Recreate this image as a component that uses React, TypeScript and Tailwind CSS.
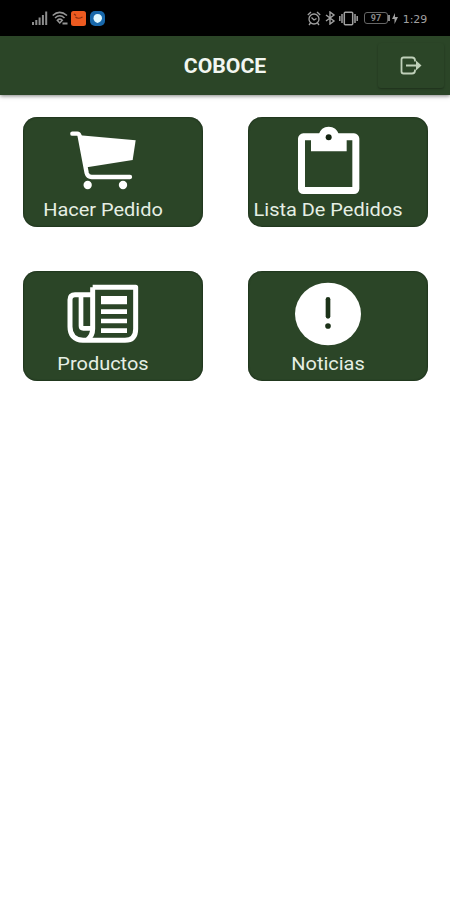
import type { ReactNode } from 'react';

function CartIcon() {
  return (
    <svg className="block h-20 w-40" viewBox="24 36 480 240" fill="none">
      <path d="M172 86H187Q192 86 194 93L215 204Q218 216 230 216H345" stroke="white" strokeWidth="13" strokeLinecap="round" strokeLinejoin="round" />
      <path d="M194 91L362 106L353 165L216 187Z" fill="white" />
      <circle cx="218" cy="240" r="12.5" fill="white" />
      <circle cx="324" cy="240" r="12.5" fill="white" />
    </svg>
  );
}

function ClipboardIcon() {
  return (
    <svg className="block h-20 w-40" viewBox="24 36 480 240" fill="none">
      <rect x="174" y="85" width="184" height="182" rx="16" fill="white" />
      <path d="M195 106H337V246H195Z" fill="#2b4527" />
      <path d="M213 88H237C240 74 251 65 266 65S293 74 296 88H320V139H213Z" fill="white" />
      <circle cx="266" cy="97" r="9" fill="#142511" />
    </svg>
  );
}

function NewspaperIcon() {
  return (
    <svg className="block h-20 w-40" viewBox="24 33 480 240" fill="none">
      <g stroke="white" strokeWidth="15" strokeLinejoin="round">
        <path d="M233 82H362V207Q362 241 330 241H204Q165 238 165 200V119Q165 104 180 104H233" />
        <path d="M233 82V207Q233 226 218 239" />
        <path d="M198 108V198Q198 205 205 205H233" strokeWidth="14" />
      </g>
      <path d="M258 108H336V133H258ZM258 148H336V162H258ZM258 176H336V190H258ZM258 205H336V219H258Z" fill="white" />
    </svg>
  );
}

function AlertIcon() {
  return (
    <svg className="block h-20 w-40" viewBox="24 33 480 240" fill="none">
      <ellipse cx="264" cy="162" rx="99" ry="94" fill="white" />
      <path d="M264 118V169" stroke="#1c3218" strokeWidth="14" strokeLinecap="round" />
      <circle cx="264" cy="198" r="8.500" fill="#1c3218" />
    </svg>
  );
}

function MenuCard({ label, children }: { label: string; children: ReactNode }) {
  return (
    <button
      className="flex h-[110px] w-[180px] flex-col items-start rounded-[14px] bg-[#2b4527] shadow-[inset_0_0_2px_#0b190b]"
    >
      {children}
      <span className="w-[160px] scale-x-[1.05] text-center text-[19px] leading-[25px] whitespace-nowrap text-[#e6efe4]">
        {label}
      </span>
    </button>
  );
}

function StatusBar() {
  return (
    <div className="flex h-9 items-center justify-between bg-black pr-[22px] pl-8 text-[#a0a0a0]">
      <div className="flex items-center">
        <svg className="h-4 w-4" viewBox="0 0 16 16" fill="#8d8d8d">
          <path d="M0 12h2v3H0zM3.300 10h2v5h-2zM6.600 7.500h2V15h-2zM9.900 5h2v10h-2zM13.200 1.500h2V15h-2z" />
        </svg>
        <svg className="ml-1 h-4 w-4" viewBox="0 0 16 16" fill="none" stroke="#959595" strokeWidth="1.500">
          <path d="M.7 5.500Q7.500-.8 15 5.500M3 8Q7.800 3.500 12.500 8M5.300 10.300Q7.800 8 10.300 10.300L7.800 13Z" />
          <path d="M10.500 13.500h5" strokeWidth="2" />
        </svg>
        <svg className="ml-[3px] h-[15px] w-[15px]" viewBox="0 0 15 15" fill="none">
          <rect width="15" height="15" rx="2.500" fill="#ed5a20" />
          <path d="M3 3l2 1.500M4.500 6Q7 8.500 11.500 6" stroke="#8a3010" strokeWidth="1.200" />
        </svg>
        <svg className="ml-1 h-[15px] w-[15px]" viewBox="0 0 15 15">
          <rect width="15" height="15" rx="5" fill="#1767aa" />
          <path d="M7.500 3C10.500 3 12 4.800 12 7.200S10 11 7.500 12C5 11 3.500 9.500 3.500 7.200S5 3 7.500 3Z" fill="#dff8ff" />
        </svg>
      </div>
      <div className="flex items-center">
        <svg className="h-[15px] w-[14px]" viewBox="0 0 14 15" fill="none" stroke="currentColor" strokeWidth="1.300">
          <circle cx="7" cy="8" r="5" />
          <path d="M.8 4L4 1M10 1l3.200 3M4.500 6.500L7 9l2.500-1.500M3.500 12l-1.500 2M10.500 12l1.500 2" />
        </svg>
        <svg className="ml-1 h-[14px] w-[11px]" viewBox="0 0 11 14" fill="none" stroke="currentColor" strokeWidth="1.400">
          <path d="M1 4l8 6-4 3V1l4 3-8 6" />
        </svg>
        <svg className="ml-[3px] h-[15px] w-[19px]" viewBox="0 0 19 15" fill="none" stroke="currentColor" strokeWidth="1.500">
          <rect x="5.300" y="1.300" width="8.400" height="12.400" rx="1" />
          <path d="M3 3v9M.8 5v5M16 3v9M18.200 5v5" />
        </svg>
        <span className="ml-[6px] flex h-[12px] w-6 items-center justify-center rounded-[3px] border border-[#666] text-[9px] leading-none font-bold text-[#888]">97</span>
        <span className="h-[6px] w-[2px] bg-[#888]" />
        <svg className="ml-[2px] h-[11px] w-[6px]" viewBox="0 0 6 11" fill="currentColor">
          <path d="M3 0v4h3L2.500 11V6H0Z" />
        </svg>
        <span className="ml-1 w-[26px] pt-[3px] text-center font-['DejaVu_Sans',sans-serif] text-[11px] leading-4 whitespace-nowrap">1:29</span>
      </div>
    </div>
  );
}

export default function App() {
  return (
    <div className="h-[900px] w-[450px] overflow-hidden bg-white font-[Roboto,sans-serif]">
      <StatusBar />
      <header className="flex h-[59px] items-center bg-[#2b4527] shadow-[0_1px_4px_rgba(0,0,0,0.5)]">
        <div className="w-[72px]" />
        <h1 className="flex-1 scale-x-[1.06] text-center text-[20px] leading-6 font-bold text-[#f2f6f1]">COBOCE</h1>
        <button className="mr-[6px] flex h-[45px] w-[66px] items-center justify-center rounded-[3px] shadow-[0_1px_2px_rgba(0,0,0,0.3)]" aria-label="Salir">
          <svg className="h-[19px] w-[22px]" viewBox="0 0 22 19" fill="none" stroke="#bfd0b9" strokeWidth="1.800">
            <path d="M15 5.500V4.500Q15 1.500 12 1.500H3.500Q1.500 1.500 1.500 3.500V15.500Q1.500 17.500 3.500 17.500H12Q15 17.500 15 14.500V13.500M6 9.500H20" />
            <path d="M16 4.500L21.500 9.500L16 14.500Z" fill="#bfd0b9" stroke="none" />
          </svg>
        </button>
      </header>
      <main className="grid grid-cols-[180px_180px] gap-x-[45px] gap-y-11 pt-[22px] pl-[23px]">
        <MenuCard label="Hacer Pedido"><CartIcon /></MenuCard>
        <MenuCard label="Lista De Pedidos"><ClipboardIcon /></MenuCard>
        <MenuCard label="Productos"><NewspaperIcon /></MenuCard>
        <MenuCard label="Noticias"><AlertIcon /></MenuCard>
      </main>
    </div>
  );
}
